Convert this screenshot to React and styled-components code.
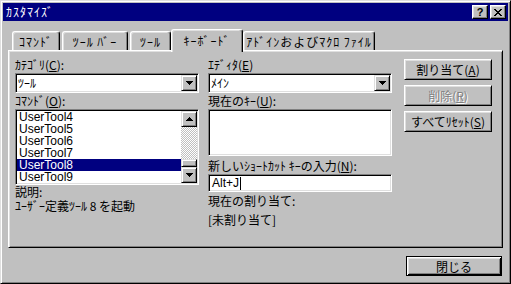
import React from 'react';
import styled, { createGlobalStyle } from 'styled-components';

const GlobalStyle = createGlobalStyle`
  html, body {
    margin: 0;
    padding: 0;
    background: #c0c0c0;
  }
  body {
    font-family: "Noto Sans CJK JP", "Liberation Sans", sans-serif;
    font-size: 12px;
    color: #000;
  }
`;

const Window = styled.div`
  box-sizing: border-box;
  width: 511px;
  height: 284px;
  padding: 2px;
  background: #c0c0c0;
  border: 1px solid;
  border-color: #dfdfdf #000 #000 #dfdfdf;
  box-shadow: inset 1px 1px #fff, inset -1px -1px #808080;
  display: flex;
  flex-direction: column;
`;

const TitleBar = styled.div`
  height: 18px;
  background: #000080;
  display: flex;
  align-items: center;
  padding: 0 2px 0 3px;
`;

const Title = styled.span`
  flex: 1;
  color: #fff;
  line-height: 18px;
  letter-spacing: 1px;
`;

const TitleButton = styled.div`
  box-sizing: border-box;
  width: 16px;
  height: 14px;
  margin-left: 2px;
  background: #c0c0c0;
  border: 1px solid;
  border-color: #fff #000 #000 #fff;
  box-shadow: inset -1px -1px #808080, inset 1px 1px #dfdfdf;
  display: flex;
  align-items: center;
  justify-content: center;
  font-family: "Liberation Sans", sans-serif;
  font-weight: bold;
  font-size: 11px;
  line-height: 12px;
`;

const Body = styled.div`
  flex: 1;
  display: flex;
  flex-direction: column;
  padding: 8px 5px 5px 5px;
`;

const TabRow = styled.div`
  display: flex;
  align-items: flex-end;
  gap: 2px;
  height: 21px;
  padding-left: 4px;
`;

const Tab = styled.div`
  box-sizing: border-box;
  width: ${p => p.$w}px;
  height: ${p => (p.$active ? 23 : 19)}px;
  margin: ${p => (p.$active ? '0 -2px -2px' : '0')};
  padding-bottom: ${p => (p.$active ? 2 : 0)}px;
  position: relative;
  z-index: ${p => (p.$active ? 1 : 0)};
  background: #c0c0c0;
  border-left: 1px solid #fff;
  border-top: 1px solid #fff;
  border-right: 1px solid #000;
  border-radius: 3px 3px 0 0;
  box-shadow: inset -1px 0 #808080, inset 1px 1px #dfdfdf;
  display: flex;
  align-items: center;
  justify-content: center;
  white-space: pre;
  letter-spacing: 1px;
`;

const Panel = styled.div`
  box-sizing: border-box;
  height: 198px;
  border: 1px solid;
  border-color: #fff #000 #000 #fff;
  box-shadow: inset 1px 1px #dfdfdf, inset -1px -1px #808080;
  padding: 6px 0 0 6px;
  display: flex;
`;

const Column = styled.div`
  width: ${p => p.$w}px;
  margin-left: ${p => p.$ml || 0}px;
  display: flex;
  flex-direction: column;
`;

const Label = styled.div`
  height: ${p => p.$h || 16}px;
  line-height: ${p => p.$h || 16}px;
  margin-top: ${p => p.$mt || 0}px;
  white-space: pre;
`;

const Sunken = styled.div`
  box-sizing: border-box;
  height: ${p => p.$h}px;
  background: #fff;
  border: 1px solid;
  border-color: #808080 #fff #fff #808080;
  box-shadow: inset 1px 1px #000, inset -1px -1px #dfdfdf;
  padding: 1px;
  display: flex;
`;

const ComboText = styled.div`
  flex: 1;
  line-height: 16px;
  padding-left: 1px;
`;

const Raised = styled.div`
  box-sizing: border-box;
  width: 16px;
  height: ${p => p.$h || 16}px;
  background: #c0c0c0;
  border: 1px solid;
  border-color: #dfdfdf #000 #000 #dfdfdf;
  box-shadow: inset 1px 1px #fff, inset -1px -1px #808080;
  display: flex;
  align-items: center;
  justify-content: center;
`;

const Items = styled.div`
  flex: 1;
  display: flex;
  flex-direction: column;
  overflow: hidden;
`;

const Item = styled.div`
  height: 12px;
  line-height: 12px;
  padding-left: 2px;
  font-family: "Liberation Sans", sans-serif;
  font-size: 12px;
  background: ${p => (p.$selected ? '#000080' : 'transparent')};
  color: ${p => (p.$selected ? '#fff' : '#000')};
`;

const ScrollBar = styled.div`
  width: 16px;
  display: flex;
  flex-direction: column;
`;

const Track = styled.div`
  flex: 1;
  background: repeating-conic-gradient(#c0c0c0 0 25%, #fff 0 50%) 0 0 / 2px 2px;
`;

const InputText = styled.div`
  line-height: 14px;
  padding-left: 2px;
  display: flex;
  align-items: center;
  font-family: "Liberation Sans", sans-serif;
`;

const Caret = styled.span`
  display: inline-block;
  width: 1px;
  height: 13px;
  background: #000;
  margin-left: 1px;
`;

const ButtonColumn = styled.div`
  width: 88px;
  margin: 2px 0 0 12px;
  display: flex;
  flex-direction: column;
  gap: 5px;
`;

const Button = styled.div`
  box-sizing: border-box;
  width: ${p => p.$w || 88}px;
  height: ${p => p.$h || 21}px;
  background: #c0c0c0;
  border: 1px solid;
  border-color: ${p => (p.$default ? '#000' : '#fff #000 #000 #fff')};
  box-shadow: ${p =>
    p.$default
      ? 'inset 1px 1px #fff, inset -1px -1px #000, inset 2px 2px #dfdfdf, inset -2px -2px #808080'
      : 'inset 1px 1px #dfdfdf, inset -1px -1px #808080'};
  display: flex;
  align-items: center;
  justify-content: center;
  color: ${p => (p.$disabled ? '#808080' : '#000')};
  text-shadow: ${p => (p.$disabled ? '1px 1px #fff' : 'none')};
  white-space: pre;
`;

const Footer = styled.div`
  margin-top: 8px;
  display: flex;
  justify-content: flex-end;
  padding-right: 1px;
`;

const Arrow = ({ up }) => (
  <svg width="7" height="4" viewBox="0 0 7 4" shapeRendering="crispEdges">
    {up ? (
      <path d="M3 0h1v1h1v1h1v1h1v1H0V3h1V2h1V1h1z" fill="#000" />
    ) : (
      <path d="M0 0h7v1H6v1H5v1H4v1H3V3H2V2H1V1H0z" fill="#000" />
    )}
  </svg>
);

const CloseGlyph = () => (
  <svg width="8" height="7" viewBox="0 0 8 7" shapeRendering="crispEdges">
    <path
      d="M0 0h2v1h1v1h2V1h1V0h2v1H7v1H6v1H5v1h1v1h1v1h1v1H6V6H5V5H3v1H2v1H0V6h1V5h1V4h1V3H2V2H1V1H0z"
      fill="#000"
    />
  </svg>
);

const Combo = ({ value }) => (
  <Sunken $h={20}>
    <ComboText>{value}</ComboText>
    <Raised>
      <Arrow />
    </Raised>
  </Sunken>
);

const commands = ['UserTool4', 'UserTool5', 'UserTool6', 'UserTool7', 'UserTool8', 'UserTool9'];

const tabs = [
  { label: 'ｺﾏﾝﾄﾞ', w: 48 },
  { label: 'ﾂｰﾙ ﾊﾞｰ', w: 66 },
  { label: 'ﾂｰﾙ', w: 41 },
  { label: 'ｷｰﾎﾞｰﾄﾞ', w: 72, active: true },
  { label: 'ｱﾄﾞｲﾝおよびﾏｸﾛ ﾌｧｲﾙ', w: 132 },
];

export default function App() {
  return (
    <>
      <GlobalStyle />
      <Window>
        <TitleBar>
          <Title>ｶｽﾀﾏｲｽﾞ</Title>
          <TitleButton>?</TitleButton>
          <TitleButton>
            <CloseGlyph />
          </TitleButton>
        </TitleBar>
        <Body>
          <TabRow>
            {tabs.map(t => (
              <Tab key={t.label} $w={t.w} $active={t.active}>
                {t.label}
              </Tab>
            ))}
          </TabRow>
          <Panel>
            <Column $w={184}>
              <Label>
                ｶﾃｺﾞﾘ(<u>C</u>):
              </Label>
              <Combo value="ﾂｰﾙ" />
              <Label>
                ｺﾏﾝﾄﾞ(<u>O</u>):
              </Label>
              <Sunken $h={76}>
                <Items>
                  {commands.map(c => (
                    <Item key={c} $selected={c === 'UserTool8'}>
                      {c}
                    </Item>
                  ))}
                </Items>
                <ScrollBar>
                  <Raised>
                    <Arrow up />
                  </Raised>
                  <Track />
                  <Raised $h={8} />
                  <Raised>
                    <Arrow />
                  </Raised>
                </ScrollBar>
              </Sunken>
              <Label $h={14}>説明:</Label>
              <Label $h={14}>ﾕｰｻﾞｰ定義ﾂｰﾙ 8 を起動</Label>
            </Column>
            <Column $w={184} $ml={9}>
              <Label>
                ｴﾃﾞｨﾀ(<u>E</u>)
              </Label>
              <Combo value="ﾒｲﾝ" />
              <Label>
                現在のｷｰ(<u>U</u>):
              </Label>
              <Sunken $h={47} />
              <Label $mt={2}>
                新しいｼｮｰﾄｶｯﾄ ｷｰの入力(<u>N</u>):
              </Label>
              <Sunken $h={18}>
                <InputText>
                  Alt+J
                  <Caret />
                </InputText>
              </Sunken>
              <Label $mt={1}>現在の割り当て:</Label>
              <Label $mt={3}>[未割り当て]</Label>
            </Column>
            <ButtonColumn>
              <Button>
                割り当て(<u>A</u>)
              </Button>
              <Button $disabled>
                削除(<u>R</u>)
              </Button>
              <Button>
                すべてﾘｾｯﾄ(<u>S</u>)
              </Button>
            </ButtonColumn>
          </Panel>
          <Footer>
            <Button $default $w={96} $h={20}>
              閉じる
            </Button>
          </Footer>
        </Body>
      </Window>
    </>
  );
}
